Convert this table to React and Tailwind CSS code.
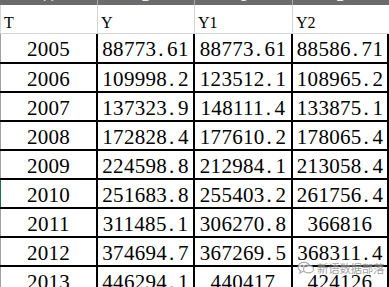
import React from "react";

const rows = [
  ["2005", "88773.61", "88773.61", "88586.71"],
  ["2006", "109998.2", "123512.1", "108965.2"],
  ["2007", "137323.9", "148111.4", "133875.1"],
  ["2008", "172828.4", "177610.2", "178065.4"],
  ["2009", "224598.8", "212984.1", "213058.4"],
  ["2010", "251683.8", "255403.2", "261756.4"],
  ["2011", "311485.1", "306270.8", "366816"],
  ["2012", "374694.7", "367269.5", "368311.4"],
  ["2013", "446294.1", "440417", "424126"],
];

function Num({ v }) {
  const parts = v.split(".");
  if (parts.length === 1) return <span>{v}</span>;
  return (
    <span>
      {parts[0]}
      <span className="inline-block w-[10.8px] pl-[2px] text-left">.</span>
      {parts[1]}
    </span>
  );
}

const widths = ["w-[98px]", "w-[97px]", "w-[98px]", "w-[96px]"];

export default function App() {
  return (
    <div className="relative w-[389px] h-[287px] overflow-hidden bg-white font-['Liberation_Serif',serif] text-black">
      {/* column header bar (cut off) */}
      <div className="flex h-[5px] bg-[#6b6b6b] overflow-hidden">
        {["A", "B", "C", "D"].map((l, i) => (
          <div
            key={l}
            className={`${widths[i]} ${i < 3 ? "border-r border-[#a9a9a9]" : ""} flex justify-center font-['Liberation_Sans',sans-serif] text-[14px] leading-[14px] text-[#e8e8e8] -mt-[11px]`}
          >
            {l}
          </div>
        ))}
      </div>
      {/* header row */}
      <div className="flex h-[29px] border-b border-[#d4d4d4]">
        {["T", "Y", "Y1", "Y2"].map((h, i) => (
          <div
            key={h}
            className={`${widths[i]} ${i === 0 ? "border-l border-[#a0a0a0]" : ""} ${i < 3 ? "border-r border-[#d4d4d4]" : ""} pl-[3px] pt-[10px] text-[16px] leading-[16px]`}
          >
            {h}
          </div>
        ))}
      </div>
      {/* data rows */}
      {rows.map((r, ri) => (
        <div
          key={r[0]}
          className={`flex ${ri === 0 ? "h-[28px]" : "h-[29px] border-t-2 border-black"}`}
        >
          {r.map((c, ci) => (
            <div
              key={ci}
              className={`${widths[ci]} border-r-2 border-black ${ci === 0 ? (r[0] === "2010" ? "border-l border-l-[#1e7145]" : "border-l border-l-[#a0a0a0]") : ""} flex justify-center pt-[5px] text-[21px] leading-[21px] tracking-[0.3px] whitespace-nowrap`}
            >
              <Num v={c} />
            </div>
          ))}
        </div>
      ))}
      {/* watermark */}
      <div className="absolute left-[297px] top-[261px] flex items-center gap-[2px] opacity-80">
        <svg width="18" height="14" viewBox="0 0 18 14" fill="none" stroke="#9a9a9a" strokeWidth="1.2">
          <ellipse cx="7" cy="6" rx="6" ry="4.6" fill="white" />
          <path d="M3.5 9.8 L2.8 12.3 L5.6 10.6" fill="white" />
          <ellipse cx="11.5" cy="8" rx="5" ry="3.8" fill="white" />
          <circle cx="5" cy="5" r="0.6" fill="#9a9a9a" />
          <circle cx="9" cy="5" r="0.6" fill="#9a9a9a" />
        </svg>
        <span className="font-['Noto_Sans_CJK_SC',sans-serif] text-[11.5px] leading-[14px] text-[#8c8c8c] tracking-[-0.3px] [text-shadow:0_0_2px_white]">
          新语数据部落
        </span>
      </div>
    </div>
  );
}
